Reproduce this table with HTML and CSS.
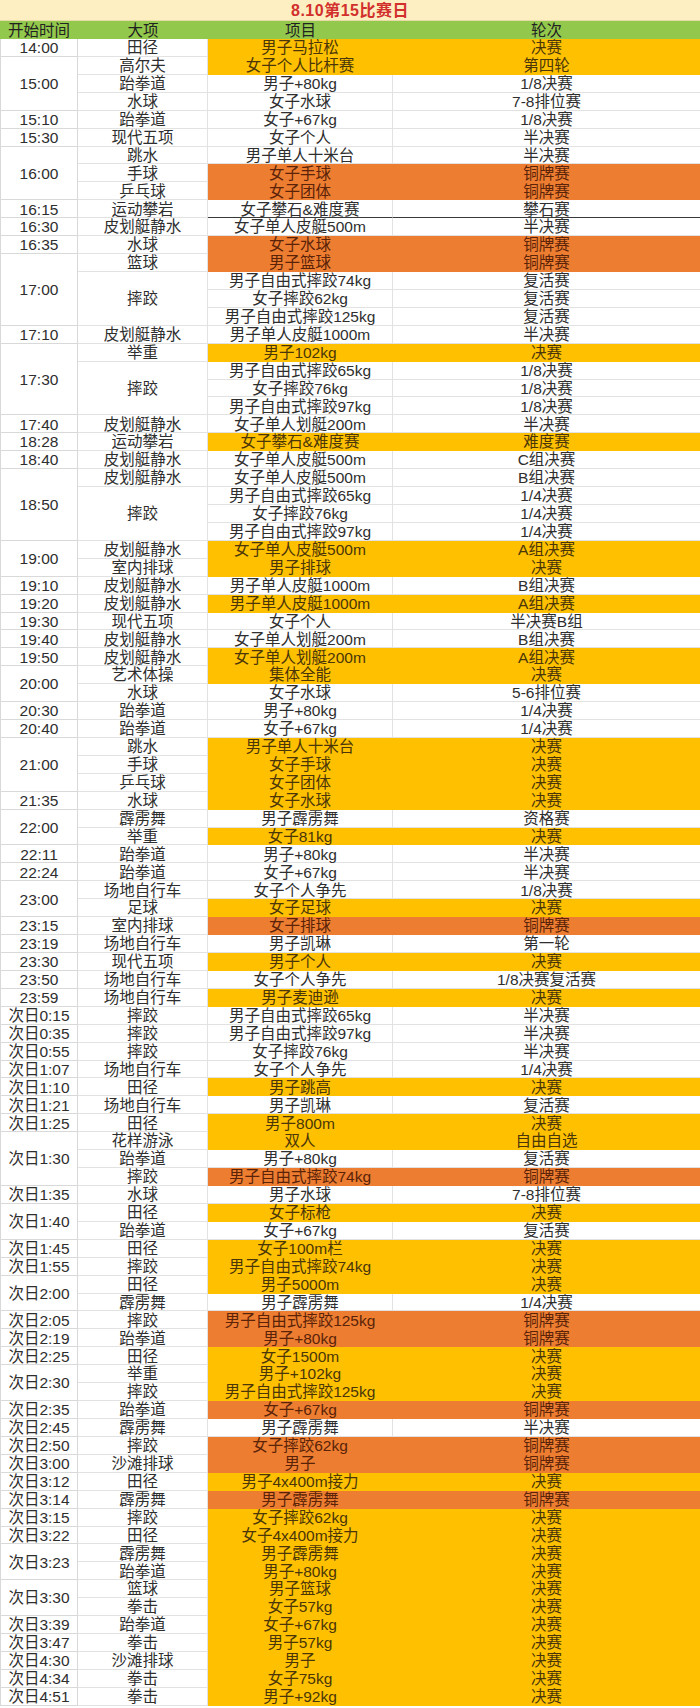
FILE: index.html
```html
<!DOCTYPE html>
<html lang="zh-CN">
<head>
<meta charset="utf-8">
<title>8.10第15比赛日</title>
<link rel="stylesheet" href="styles.css">
</head>
<body>
<div class="sheet">
  <div class="title">8.10第15比赛日</div>
  <div class="hd">开始时间</div><div class="hd">大项</div><div class="hd">项目</div><div class="hd">轮次</div>

  <div class="t">14:00</div><div class="s">田径</div><div class="e y">男子马拉松</div><div class="r y">决赛</div>
  <div class="t sp3">15:00</div><div class="s">高尔夫</div><div class="e y">女子个人比杆赛</div><div class="r y">第四轮</div>
  <div class="s">跆拳道</div><div class="e">男子+80kg</div><div class="r">1/8决赛</div>
  <div class="s">水球</div><div class="e">女子水球</div><div class="r">7-8排位赛</div>
  <div class="t">15:10</div><div class="s">跆拳道</div><div class="e">女子+67kg</div><div class="r">1/8决赛</div>
  <div class="t">15:30</div><div class="s">现代五项</div><div class="e">女子个人</div><div class="r">半决赛</div>
  <div class="t sp3">16:00</div><div class="s">跳水</div><div class="e">男子单人十米台</div><div class="r">半决赛</div>
  <div class="s">手球</div><div class="e o">女子手球</div><div class="r o">铜牌赛</div>
  <div class="s">乒乓球</div><div class="e o">女子团体</div><div class="r o">铜牌赛</div>
  <div class="t">16:15</div><div class="s">运动攀岩</div><div class="e dk">女子攀石&amp;难度赛</div><div class="r dk">攀石赛</div>
  <div class="t">16:30</div><div class="s">皮划艇静水</div><div class="e">女子单人皮艇500m</div><div class="r">半决赛</div>
  <div class="t">16:35</div><div class="s">水球</div><div class="e o">女子水球</div><div class="r o">铜牌赛</div>
  <div class="t sp4">17:00</div><div class="s">篮球</div><div class="e o">男子篮球</div><div class="r o">铜牌赛</div>
  <div class="s sp3">摔跤</div><div class="e">男子自由式摔跤74kg</div><div class="r">复活赛</div>
  <div class="e">女子摔跤62kg</div><div class="r">复活赛</div>
  <div class="e">男子自由式摔跤125kg</div><div class="r">复活赛</div>
  <div class="t">17:10</div><div class="s">皮划艇静水</div><div class="e">男子单人皮艇1000m</div><div class="r">半决赛</div>
  <div class="t sp4">17:30</div><div class="s">举重</div><div class="e y">男子102kg</div><div class="r y">决赛</div>
  <div class="s sp3">摔跤</div><div class="e">男子自由式摔跤65kg</div><div class="r">1/8决赛</div>
  <div class="e">女子摔跤76kg</div><div class="r">1/8决赛</div>
  <div class="e">男子自由式摔跤97kg</div><div class="r">1/8决赛</div>
  <div class="t">17:40</div><div class="s">皮划艇静水</div><div class="e">女子单人划艇200m</div><div class="r">半决赛</div>
  <div class="t">18:28</div><div class="s">运动攀岩</div><div class="e y">女子攀石&amp;难度赛</div><div class="r y">难度赛</div>
  <div class="t">18:40</div><div class="s">皮划艇静水</div><div class="e">女子单人皮艇500m</div><div class="r">C组决赛</div>
  <div class="t sp4">18:50</div><div class="s">皮划艇静水</div><div class="e">女子单人皮艇500m</div><div class="r">B组决赛</div>
  <div class="s sp3">摔跤</div><div class="e">男子自由式摔跤65kg</div><div class="r">1/4决赛</div>
  <div class="e">女子摔跤76kg</div><div class="r">1/4决赛</div>
  <div class="e">男子自由式摔跤97kg</div><div class="r">1/4决赛</div>
  <div class="t sp2">19:00</div><div class="s">皮划艇静水</div><div class="e y">女子单人皮艇500m</div><div class="r y">A组决赛</div>
  <div class="s">室内排球</div><div class="e y">男子排球</div><div class="r y">决赛</div>
  <div class="t">19:10</div><div class="s">皮划艇静水</div><div class="e">男子单人皮艇1000m</div><div class="r">B组决赛</div>
  <div class="t">19:20</div><div class="s">皮划艇静水</div><div class="e y">男子单人皮艇1000m</div><div class="r y">A组决赛</div>
  <div class="t">19:30</div><div class="s">现代五项</div><div class="e">女子个人</div><div class="r">半决赛B组</div>
  <div class="t">19:40</div><div class="s">皮划艇静水</div><div class="e">女子单人划艇200m</div><div class="r">B组决赛</div>
  <div class="t">19:50</div><div class="s">皮划艇静水</div><div class="e y">女子单人划艇200m</div><div class="r y">A组决赛</div>
  <div class="t sp2">20:00</div><div class="s">艺术体操</div><div class="e y">集体全能</div><div class="r y">决赛</div>
  <div class="s">水球</div><div class="e">女子水球</div><div class="r">5-6排位赛</div>
  <div class="t">20:30</div><div class="s">跆拳道</div><div class="e">男子+80kg</div><div class="r">1/4决赛</div>
  <div class="t">20:40</div><div class="s">跆拳道</div><div class="e">女子+67kg</div><div class="r">1/4决赛</div>
  <div class="t sp3">21:00</div><div class="s">跳水</div><div class="e y">男子单人十米台</div><div class="r y">决赛</div>
  <div class="s">手球</div><div class="e y">女子手球</div><div class="r y">决赛</div>
  <div class="s">乒乓球</div><div class="e y">女子团体</div><div class="r y">决赛</div>
  <div class="t">21:35</div><div class="s">水球</div><div class="e y">女子水球</div><div class="r y">决赛</div>
  <div class="t sp2">22:00</div><div class="s">霹雳舞</div><div class="e">男子霹雳舞</div><div class="r">资格赛</div>
  <div class="s">举重</div><div class="e y">女子81kg</div><div class="r y">决赛</div>
  <div class="t">22:11</div><div class="s">跆拳道</div><div class="e">男子+80kg</div><div class="r">半决赛</div>
  <div class="t">22:24</div><div class="s">跆拳道</div><div class="e">女子+67kg</div><div class="r">半决赛</div>
  <div class="t sp2">23:00</div><div class="s">场地自行车</div><div class="e">女子个人争先</div><div class="r">1/8决赛</div>
  <div class="s">足球</div><div class="e y">女子足球</div><div class="r y">决赛</div>
  <div class="t">23:15</div><div class="s">室内排球</div><div class="e o">女子排球</div><div class="r o">铜牌赛</div>
  <div class="t">23:19</div><div class="s">场地自行车</div><div class="e">男子凯琳</div><div class="r">第一轮</div>
  <div class="t">23:30</div><div class="s">现代五项</div><div class="e y">男子个人</div><div class="r y">决赛</div>
  <div class="t">23:50</div><div class="s">场地自行车</div><div class="e">女子个人争先</div><div class="r">1/8决赛复活赛</div>
  <div class="t">23:59</div><div class="s">场地自行车</div><div class="e y">男子麦迪逊</div><div class="r y">决赛</div>
  <div class="t">次日0:15</div><div class="s">摔跤</div><div class="e">男子自由式摔跤65kg</div><div class="r">半决赛</div>
  <div class="t">次日0:35</div><div class="s">摔跤</div><div class="e">男子自由式摔跤97kg</div><div class="r">半决赛</div>
  <div class="t">次日0:55</div><div class="s">摔跤</div><div class="e">女子摔跤76kg</div><div class="r">半决赛</div>
  <div class="t">次日1:07</div><div class="s">场地自行车</div><div class="e">女子个人争先</div><div class="r">1/4决赛</div>
  <div class="t">次日1:10</div><div class="s">田径</div><div class="e y">男子跳高</div><div class="r y">决赛</div>
  <div class="t">次日1:21</div><div class="s">场地自行车</div><div class="e">男子凯琳</div><div class="r">复活赛</div>
  <div class="t">次日1:25</div><div class="s">田径</div><div class="e y">男子800m</div><div class="r y">决赛</div>
  <div class="t sp3">次日1:30</div><div class="s">花样游泳</div><div class="e y">双人</div><div class="r y">自由自选</div>
  <div class="s">跆拳道</div><div class="e">男子+80kg</div><div class="r">复活赛</div>
  <div class="s">摔跤</div><div class="e o">男子自由式摔跤74kg</div><div class="r o">铜牌赛</div>
  <div class="t">次日1:35</div><div class="s">水球</div><div class="e">男子水球</div><div class="r">7-8排位赛</div>
  <div class="t sp2">次日1:40</div><div class="s">田径</div><div class="e y">女子标枪</div><div class="r y">决赛</div>
  <div class="s">跆拳道</div><div class="e">女子+67kg</div><div class="r">复活赛</div>
  <div class="t">次日1:45</div><div class="s">田径</div><div class="e y">女子100m栏</div><div class="r y">决赛</div>
  <div class="t">次日1:55</div><div class="s">摔跤</div><div class="e y">男子自由式摔跤74kg</div><div class="r y">决赛</div>
  <div class="t sp2">次日2:00</div><div class="s">田径</div><div class="e y">男子5000m</div><div class="r y">决赛</div>
  <div class="s">霹雳舞</div><div class="e">男子霹雳舞</div><div class="r">1/4决赛</div>
  <div class="t">次日2:05</div><div class="s">摔跤</div><div class="e o">男子自由式摔跤125kg</div><div class="r o">铜牌赛</div>
  <div class="t">次日2:19</div><div class="s">跆拳道</div><div class="e o">男子+80kg</div><div class="r o">铜牌赛</div>
  <div class="t">次日2:25</div><div class="s">田径</div><div class="e y">女子1500m</div><div class="r y">决赛</div>
  <div class="t sp2">次日2:30</div><div class="s">举重</div><div class="e y">男子+102kg</div><div class="r y">决赛</div>
  <div class="s">摔跤</div><div class="e y">男子自由式摔跤125kg</div><div class="r y">决赛</div>
  <div class="t">次日2:35</div><div class="s">跆拳道</div><div class="e o">女子+67kg</div><div class="r o">铜牌赛</div>
  <div class="t">次日2:45</div><div class="s">霹雳舞</div><div class="e">男子霹雳舞</div><div class="r">半决赛</div>
  <div class="t">次日2:50</div><div class="s">摔跤</div><div class="e o">女子摔跤62kg</div><div class="r o">铜牌赛</div>
  <div class="t">次日3:00</div><div class="s">沙滩排球</div><div class="e o">男子</div><div class="r o">铜牌赛</div>
  <div class="t">次日3:12</div><div class="s">田径</div><div class="e y">男子4x400m接力</div><div class="r y">决赛</div>
  <div class="t">次日3:14</div><div class="s">霹雳舞</div><div class="e o">男子霹雳舞</div><div class="r o">铜牌赛</div>
  <div class="t">次日3:15</div><div class="s">摔跤</div><div class="e y">女子摔跤62kg</div><div class="r y">决赛</div>
  <div class="t">次日3:22</div><div class="s">田径</div><div class="e y">女子4x400m接力</div><div class="r y">决赛</div>
  <div class="t sp2">次日3:23</div><div class="s">霹雳舞</div><div class="e y">男子霹雳舞</div><div class="r y">决赛</div>
  <div class="s">跆拳道</div><div class="e y">男子+80kg</div><div class="r y">决赛</div>
  <div class="t sp2">次日3:30</div><div class="s">篮球</div><div class="e y">男子篮球</div><div class="r y">决赛</div>
  <div class="s">拳击</div><div class="e y">女子57kg</div><div class="r y">决赛</div>
  <div class="t">次日3:39</div><div class="s">跆拳道</div><div class="e y">女子+67kg</div><div class="r y">决赛</div>
  <div class="t">次日3:47</div><div class="s">拳击</div><div class="e y">男子57kg</div><div class="r y">决赛</div>
  <div class="t">次日4:30</div><div class="s">沙滩排球</div><div class="e y">男子</div><div class="r y">决赛</div>
  <div class="t">次日4:34</div><div class="s">拳击</div><div class="e y">女子75kg</div><div class="r y">决赛</div>
  <div class="t">次日4:51</div><div class="s">拳击</div><div class="e y">男子+92kg</div><div class="r y">决赛</div>
</div>
</body>
</html>
```
FILE: styles.css
```css
html, body {
  margin: 0;
  padding: 0;
  background: #ffffff;
}

.sheet {
  width: 700px;
  display: grid;
  grid-template-columns: 78px 130px 185px 307px;
  grid-template-rows: 21px 18px repeat(93, 17.93px);
  font-family: "Liberation Sans", "Noto Sans CJK SC", sans-serif;
  font-size: 15.5px;
  color: #2e2e2e;
}

.sheet > div {
  box-sizing: border-box;
  display: flex;
  align-items: center;
  justify-content: center;
  white-space: nowrap;
  line-height: 1;
  padding-top: 1px;
}

.title {
  grid-column: 1 / -1;
  background: #fdefc2;
  color: #d2302c;
  font-weight: bold;
  font-size: 16px;
  letter-spacing: 0.5px;
  border-bottom: 1px solid #e8d9a8;
}

.hd {
  background: #92c94c;
  color: #222;
}

.t {
  border-left: 1px solid #d9d9d9;
  border-right: 1px solid #d9d9d9;
  border-bottom: 1px solid #d9d9d9;
}

.s {
  border-right: 1px solid #e2e2e2;
  border-bottom: 1px solid #e2e2e2;
}

.e {
  border-right: 1px solid #e2e2e2;
  border-bottom: 1px solid #e2e2e2;
}

.r {
  border-bottom: 1px solid #e2e2e2;
}

.sp2 { grid-row: span 2; }
.sp3 { grid-row: span 3; }
.sp4 { grid-row: span 4; }

.sheet > .y {
  background: #ffc000;
  border-color: #ffc000;
  color: #4a3608;
}

.sheet > .o {
  background: #ed7d31;
  border-color: #ed7d31;
  color: #5a2308;
}

.sheet > .dk {
  border-bottom: 1px solid #3a3a3a;
}
```
